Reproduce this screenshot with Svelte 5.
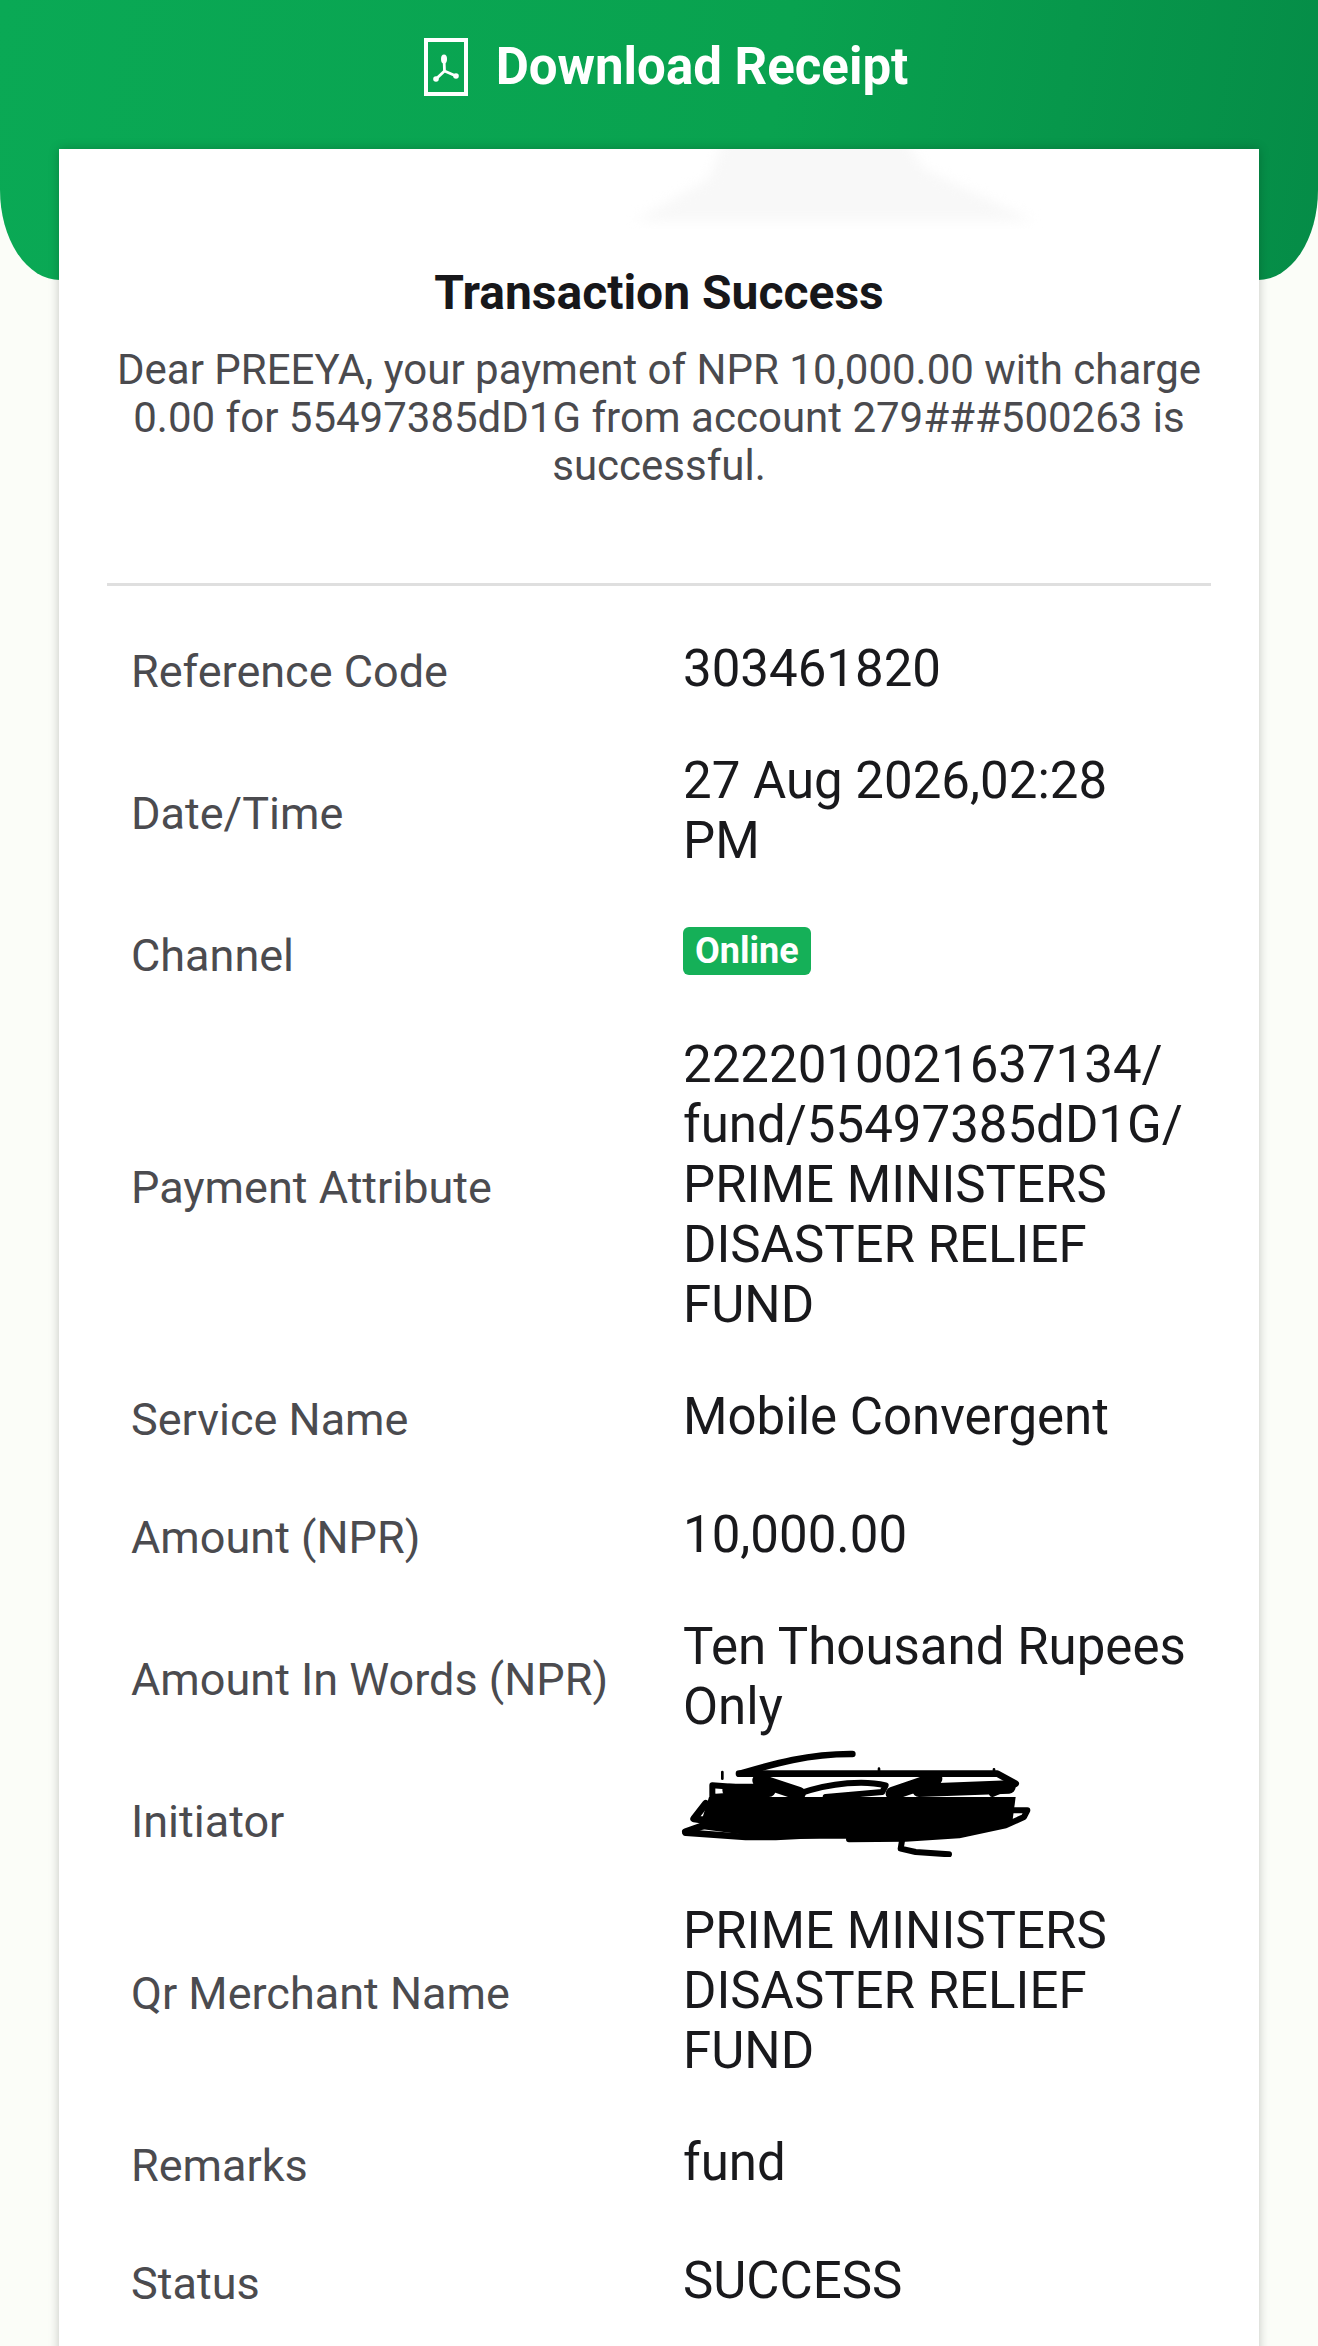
<script lang="ts">
	const rows = [
		{ label: 'Reference Code', value: ['303461820'] },
		{ label: 'Date/Time', value: ['27 Aug 2026,02:28 PM'] },
		{ label: 'Channel', kind: 'badge', value: ['Online'] },
		{ label: 'Payment Attribute', value: ['2222010021637134/', 'fund/55497385dD1G/', 'PRIME MINISTERS DISASTER RELIEF FUND'] },
		{ label: 'Service Name', value: ['Mobile Convergent'] },
		{ label: 'Amount (NPR)', value: ['10,000.00'], loose: true },
		{ label: 'Amount In Words (NPR)', value: ['Ten Thousand Rupees Only'] },
		{ label: 'Initiator', kind: 'scribble', value: [] },
		{ label: 'Qr Merchant Name', value: ['PRIME MINISTERS DISASTER RELIEF FUND'] },
		{ label: 'Remarks', value: ['fund'] },
		{ label: 'Status', value: ['SUCCESS'], loose: true }
	];
</script>

<div class="page">
	<header class="top">
		<svg class="pdf" viewBox="0 0 44 58" width="44" height="58" aria-hidden="true">
			<rect x="2" y="2" width="40" height="54" fill="none" stroke="#fff" stroke-width="4" />
			<path d="M20 20 L20.5 33 M20.5 33 L12 41 M20.5 33 L32 38" fill="none" stroke="#fff" stroke-width="2.8" stroke-linecap="round" />
			<ellipse cx="20" cy="21" rx="3" ry="4.5" fill="#fff" />
			<circle cx="12" cy="41" r="2.8" fill="#fff" />
			<circle cx="32" cy="38" r="2.8" fill="#fff" />
		</svg>
		<span>Download Receipt</span>
	</header>

	<main class="card">
		<svg class="smudge" viewBox="0 0 420 80" width="420" height="80" aria-hidden="true">
			<path d="M100 -10 H280 L300 20 L410 72 H10 L85 30 Z" fill="#f8f8f8" />
		</svg>

		<section class="intro">
			<h1>Transaction Success</h1>
			<p>Dear PREEYA, your payment of NPR 10,000.00 with charge 0.00 for 55497385dD1G from account 279###500263 is successful.</p>
		</section>

		<div class="details">
			{#each rows as row (row.label)}
				<div class="row" class:loose={row.loose}>
					<div class="label">{row.label}</div>
					<div class="value">
						{#if row.kind === 'badge'}
							<span class="badge">{row.value[0]}</span>
						{:else if row.kind === 'scribble'}
							<svg class="scribble" viewBox="60 75 1080 330" width="360" height="110" aria-hidden="true">
								<path d="M150 225 H1070 L1060 300 L950 335 L740 345 L560 350 L350 350 L120 320 Z" fill="#000" />
								<g fill="none" stroke="#000" stroke-linecap="round" stroke-linejoin="round">
									<path stroke-width="20" d="M245 155 C330 130 440 95 580 96" />
									<path stroke-width="20" d="M240 155 H1015 L1070 185 L1000 215" />
									<path stroke-width="18" d="M420 215 C520 180 620 175 680 190 L670 210 L500 225" />
									<path stroke-width="18" d="M230 195 L160 190 L160 225 L300 215" />
									<path stroke-width="40" d="M300 175 L420 215 M210 205 H330 M700 215 L830 170 M780 205 L1050 195" />
									<path stroke-width="22" d="M140 245 L105 290 L170 300 M80 330 L150 305" />
									<path stroke-width="20" d="M80 332 L260 345 H350 L540 335 L700 345" />
									<path stroke-width="18" d="M1000 265 H1105 L1095 285 L1040 310 L900 340 L740 350 L570 352" />
									<path stroke-width="18" d="M730 350 L725 380 L770 390 L870 397" />
									<path stroke-width="8" d="M190 170 V150 M660 150 V140 M1005 150 V142" />
								</g>
							</svg>
						{:else}
							{#each row.value as part}<span>{part}</span>{/each}
						{/if}
					</div>
				</div>
			{/each}
		</div>
	</main>
</div>

<style>
	:global(body) {
		margin: 0;
		background: #fbfdf8;
	}
	.page {
		position: relative;
		height: 2346px;
		overflow: hidden;
		font-family: Roboto, "Liberation Sans", sans-serif;
		background: #fbfdf8;
	}
	.top {
		height: 280px;
		box-sizing: border-box;
		padding: 0 0 147px 14px;
		border-radius: 0 0 60px 60px / 0 0 90px 90px;
		background: linear-gradient(100deg, #0aa955 0%, #09a24f 58%, #058c47 100%);
		color: #fff;
		font-size: 51px;
		font-weight: 700;
		display: flex;
		align-items: center;
		justify-content: center;
		gap: 28px;
	}
	.card {
		position: relative;
		margin: -131px 59px 0;
		min-height: 2300px;
		box-sizing: border-box;
		padding: 0 48px;
		background: #fff;
		box-shadow: 0 0 10px rgba(0, 0, 0, 0.22);
	}
	.smudge {
		position: absolute;
		top: 0;
		left: 565px;
	}
	.smudge path {
		filter: blur(6px);
	}
	.intro {
		position: relative;
		padding-top: 115px;
		padding-bottom: 93px;
		border-bottom: 3px solid #dfdfdf;
		text-align: center;
	}
	h1 {
		margin: 0 0 24px;
		font-size: 48px;
		line-height: 58px;
		font-weight: 700;
		color: #17171a;
	}
	.intro p {
		margin: 0 auto;
		font-size: 42px;
		line-height: 48px;
		color: #4a4a4e;
	}
	.details {
		padding: 27px 24px 0 24px;
	}
	.row {
		display: grid;
		grid-template-columns: 552px 510px;
		align-items: center;
		padding: 26px 0;
	}
	.row.loose {
		padding-top: 32px;
	}
	.label {
		padding-top: 6px;
		font-size: 45px;
		line-height: 50px;
		color: #4b4b4f;
	}
	.value {
		font-size: 51px;
		line-height: 60px;
		color: #19191c;
	}
	.value span {
		display: block;
	}
	.value .badge {
		display: inline-block;
		vertical-align: top;
		margin: 4px 0 -4px;
		padding: 0 12px;
		border-radius: 6px;
		background: #15b058;
		color: #fff;
		font-size: 36px;
		font-weight: 700;
		line-height: 48px;
	}
	.scribble {
		display: block;
		margin: -42px 0 -8px -4px;
	}
</style>
